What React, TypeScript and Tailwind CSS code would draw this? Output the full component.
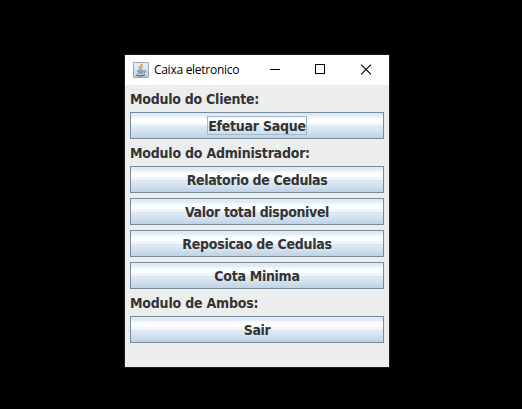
import type { ReactNode } from "react";

function JavaIcon() {
  return (
    <svg width="16" height="16" viewBox="0 0 16 16" fill="none">
      <defs>
        <linearGradient id="tile" x1="0" y1="0" x2="0" y2="1">
          <stop offset="0" stopColor="#eef2f7" />
          <stop offset="1" stopColor="#c3d3e6" />
        </linearGradient>
      </defs>
      <rect x="0.5" y="0.5" width="15" height="15" rx="0.5" fill="url(#tile)" stroke="#93a4be" />
      <path d="M9 1.8C9.2 4 5.6 4.6 6.6 6.4L7.6 8" stroke="#d98b3a" strokeWidth="1.5" />
      <path d="M10.4 4.2C8.6 5 8 5.6 9 6.6C9.4 7.2 9 7.800 8.6 8.2" stroke="#e0a05c" strokeWidth="1.1" />
      <path d="M4 9H10.800M4.800 11H10.2" stroke="#47658f" strokeWidth="1.1" />
      <path d="M11 8.8C13.4 8.2 13 10.6 10.8 11" stroke="#47658f" strokeWidth="1" />
      <path d="M3 13C5.4 13.9 9.6 13.9 12.4 13" stroke="#47658f" strokeWidth="1.200" />
    </svg>
  );
}

function Label({ children, className }: { children: ReactNode; className: string }) {
  return (
    <div className={`h-[17px] leading-[19px] whitespace-nowrap ${className}`}>
      {children}
    </div>
  );
}

function MetalButton({ children, focused = false, className }: { children: string; focused?: boolean; className: string }) {
  return (
    <button className="flex h-[27px] w-full shrink-0 items-center justify-center border border-[#7a8a99] bg-[linear-gradient(to_bottom,#dde8f3_0px,#e6eef6_4px,#f3f7fb_4px,#f6f9fc_6px,#ffffff_6px,#ffffff_10px,#f2f6fa_10px,#f0f4f9_13px,#dfe9f2_13px,#d9e5f0_17px,#cfdeec_20px,#bdd2e6_25px)] p-0">
      <span
        className={`flex h-[19px] items-center justify-center whitespace-nowrap border pt-[2px] ${focused ? "border-[#a3b8cc]" : "border-transparent"} ${className}`}
      >
        {children}
      </span>
    </button>
  );
}

export default function App() {
  return (
    <div className="flex h-[409px] w-[522px] items-start bg-black pl-[125px] pt-[55px]">
      <main className="h-[312px] w-[264px] bg-[#eceeed] shadow-[0_0_0_1px_#1c1c1c]">
        <header className="flex h-[30px] items-center bg-white pl-2">
          <JavaIcon />
          <span className="ml-[5px] w-[86px] whitespace-nowrap font-['Open_Sans',sans-serif] text-[12px] tracking-[-0.27px] text-black">
            Caixa eletronico
          </span>
          <svg width="140" height="30" viewBox="0 0 140 30" fill="none" stroke="#000" shapeRendering="crispEdges" className="ml-[10px]">
            <path d="M20 14.5H30" />
            <rect x="65.500" y="9.500" width="9" height="9" />
            <path d="M111.500 9.500L121.500 19.500M121.500 9.500L111.500 19.500" shapeRendering="auto" strokeWidth="1.1" />
          </svg>
        </header>
        <div className="flex flex-col gap-[5px] px-[5px] pt-[5px] font-['DejaVu_Sans_Condensed','DejaVu_Sans',sans-serif] text-[14px] font-bold text-[#333]">
          <Label className="tracking-[-0.25px]">Modulo do Cliente:</Label>
          <MetalButton focused className="w-[100px] tracking-[-0.25px]">Efetuar Saque</MetalButton>
          <Label className="tracking-[-0.22px]">Modulo do Administrador:</Label>
          <MetalButton className="tracking-[-0.33px]">Relatorio de Cedulas</MetalButton>
          <MetalButton className="tracking-[-0.35px]">Valor total disponivel</MetalButton>
          <MetalButton className="tracking-[-0.27px]">Reposicao de Cedulas</MetalButton>
          <MetalButton className="tracking-[-0.3px]">Cota Minima</MetalButton>
          <Label className="tracking-[-0.2px]">Modulo de Ambos:</Label>
          <MetalButton className="tracking-[-0.4px]">Sair</MetalButton>
        </div>
      </main>
    </div>
  );
}
